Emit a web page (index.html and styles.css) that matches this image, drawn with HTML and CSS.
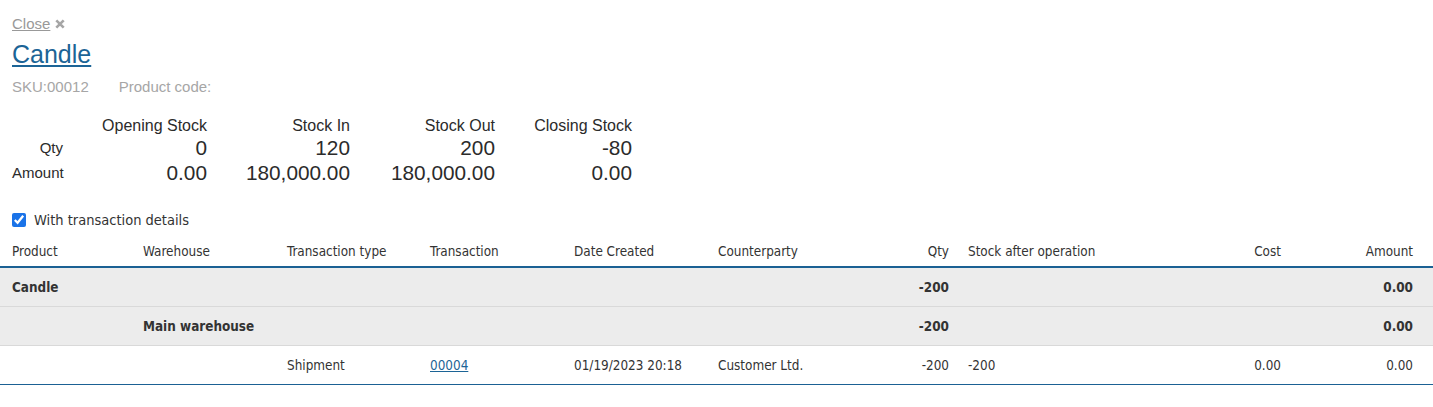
FILE: index.html
```html
<!DOCTYPE html>
<html>
<head>
<meta charset="utf-8">
<link rel="stylesheet" href="styles.css">
</head>
<body>
<div class="top">
  <div class="close-row"><a class="close" href="#">Close</a><svg class="close-x" width="10" height="10" viewBox="0 0 10 10"><path d="M1.3 1.3 L8.7 8.7 M8.7 1.3 L1.3 8.7" stroke="#a6a6a6" stroke-width="2.6" stroke-linecap="butt"/></svg></div>
  <h1 class="title"><a href="#">Candle</a></h1>
  <div class="meta"><span>SKU:00012</span><span class="pcode">Product code:</span></div>

  <div class="stats">
    <div></div>
    <div class="sh">Opening Stock</div>
    <div class="sh">Stock In</div>
    <div class="sh">Stock Out</div>
    <div class="sh">Closing Stock</div>

    <div class="sl">Qty</div>
    <div class="sv">0</div>
    <div class="sv">120</div>
    <div class="sv">200</div>
    <div class="sv">-80</div>

    <div class="sl amt">Amount</div>
    <div class="sv amt">0.00</div>
    <div class="sv amt">180,000.00</div>
    <div class="sv amt">180,000.00</div>
    <div class="sv amt">0.00</div>
  </div>

  <label class="chk"><input type="checkbox" checked><span>With transaction details</span></label>
</div>

<table class="grid">
  <colgroup>
    <col style="width:134px"><col style="width:144px"><col style="width:143px"><col style="width:144px"><col style="width:144px"><col style="width:150px"><col style="width:100px"><col style="width:191px"><col style="width:141px"><col style="width:142px">
  </colgroup>
  <thead>
    <tr>
      <th>Product</th><th>Warehouse</th><th>Transaction type</th><th>Transaction</th><th>Date Created</th><th>Counterparty</th><th class="r">Qty</th><th>Stock after operation</th><th class="r">Cost</th><th class="r last">Amount</th>
    </tr>
  </thead>
  <tbody>
    <tr class="grp">
      <td>Candle</td><td></td><td></td><td></td><td></td><td></td><td class="r">-200</td><td></td><td></td><td class="r last">0.00</td>
    </tr>
    <tr class="grp">
      <td></td><td>Main warehouse</td><td></td><td></td><td></td><td></td><td class="r">-200</td><td></td><td></td><td class="r last">0.00</td>
    </tr>
    <tr class="det">
      <td></td><td></td><td>Shipment</td><td><a href="#">00004</a></td><td>01/19/2023 20:18</td><td>Customer Ltd.</td><td class="r">-200</td><td>-200</td><td class="r">0.00</td><td class="r last">0.00</td>
    </tr>
  </tbody>
</table>
</body>
</html>
```
FILE: styles.css
```css
html, body {
  margin: 0;
  padding: 0;
  background: #fff;
}
body {
  font-family: "Liberation Sans", Arial, sans-serif;
  color: #333;
}
.top {
  padding: 14px 12px 0 12px;
}
.close-row {
  display: flex;
  align-items: center;
  height: 18px;
  font-size: 15px;
}
.close {
  color: #999;
  text-decoration: underline;
}
.close-x {
  margin-left: 5px;
  margin-top: 2px;
}
.title {
  margin: 7px 0 0 0;
  font-size: 25px;
  font-weight: normal;
  line-height: 30px;
}
.title a {
  color: #1c6496;
  text-decoration: underline;
}
.meta {
  margin-top: 9px;
  font-size: 15px;
  color: #a6a6a6;
  line-height: 18px;
}
.pcode {
  margin-left: 30px;
}
.stats {
  margin-top: 20px;
  display: grid;
  grid-template-columns: 51px 144px 143px 145px 137px;
  font-family: "Liberation Sans", Arial, sans-serif;
  color: #2b2b2b;
}
.sh {
  text-align: right;
  font-size: 16px;
  line-height: 20px;
}
.sl {
  text-align: right;
  font-size: 15px;
  line-height: 24px;
  align-self: end;
}
.sv {
  text-align: right;
  font-size: 20.8px;
  line-height: 24px;
}
.sl.amt, .sv.amt {
  line-height: 26px;
}
.chk {
  display: flex;
  align-items: center;
  margin-top: 25px;
  font-family: "DejaVu Sans Condensed", "DejaVu Sans", sans-serif;
  font-size: 14.5px;
  color: #333;
  height: 18px;
}
.chk input {
  width: 14px;
  height: 14px;
  margin: 0 8px 0 0;
  accent-color: #1a73e8;
}
.grid {
  margin-top: 7px;
  width: 1433px;
  border-collapse: collapse;
  table-layout: fixed;
  font-family: "DejaVu Sans Condensed", "DejaVu Sans", sans-serif;
  font-size: 13.4px;
  color: #333;
}
.grid th, .grid td {
  padding: 0 10px 0 9px;
  text-align: left;
  white-space: nowrap;
  overflow: hidden;
}
.grid th:first-child, .grid td:first-child {
  padding-left: 12px;
}
.grid th {
  font-weight: normal;
  height: 30px;
  vertical-align: middle;
  border-bottom: 2px solid #1b6194;
}
.grid .r {
  text-align: right;
}
.grid .last {
  padding-right: 20px;
}
.grid tbody td {
  height: 38px;
  vertical-align: middle;
}
.grid tr.grp td {
  background: #ececec;
  font-weight: bold;
  border-bottom: 1px solid #d9d9d9;
}
.grid tr.det td {
  border-bottom: 1px solid #1b6194;
}
.grid a {
  color: #1c6496;
  text-decoration: underline;
}
```
